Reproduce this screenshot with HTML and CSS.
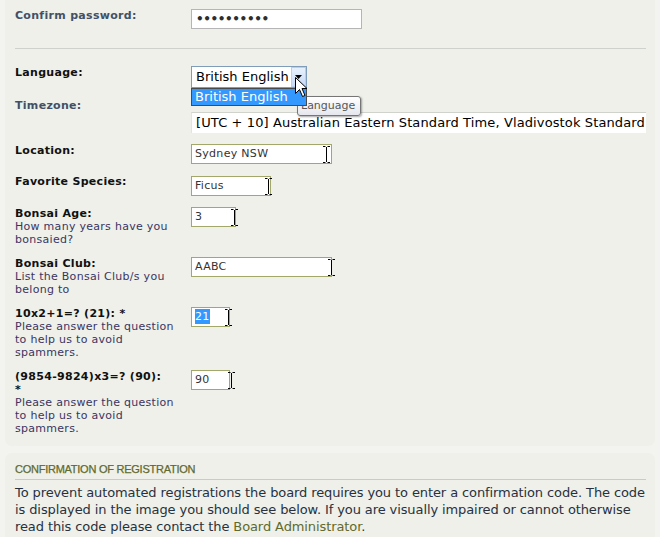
FILE: index.html
```html
<!DOCTYPE html>
<html lang="en">
<head>
<meta charset="utf-8">
<title>Register</title>
<link rel="stylesheet" href="styles.css">
</head>
<body>
<div class="page">
  <div class="panel panel-top">
    <div class="row">
      <div class="label slate">Confirm password:</div>
      <div class="field"><span class="input pw">••••••••••</span></div>
    </div>

    <hr class="sep">

    <div class="row row-lang">
      <div class="label">Language:</div>
      <div class="field">
        <div class="select-lang">
          <span class="sel-text">British English</span>
          <span class="sel-btn"><svg width="7" height="4" viewBox="0 0 7 4"><path d="M0 0h7L3.5 4z" fill="#000"/></svg></span>
          <div class="tooltip">Language</div>
          <div class="dropdown">British English</div>
          <svg class="pointer" width="13" height="21" viewBox="0 0 13 21"><path d="M0.5 0.5V16.5L4.5 12.5L7.5 19.5L10 18.5L7 11.5H12Z" fill="#fff" stroke="#000" stroke-width="1" stroke-linejoin="miter"/></svg>
        </div>
      </div>
    </div>

    <div class="row row-tz">
      <div class="label slate">Timezone:</div>
      <div class="field"><div class="select-tz">[UTC + 10] Australian Eastern Standard Time, Vladivostok Standard Time</div></div>
    </div>

    <div class="row">
      <div class="label">Location:</div>
      <div class="field"><span class="input w141">Sydney NSW<svg class="ibeam" style="left:131px" width="7" height="17" viewBox="0 0 7 17"><path d="M0 0.5H2.5M4.5 0.5H7M3.5 1V16M0 16.5H2.5M4.5 16.5H7" stroke="#000" fill="none"/></svg></span></div>
    </div>

    <div class="row">
      <div class="label">Favorite Species:</div>
      <div class="field"><span class="input w80 mt1">Ficus<svg class="ibeam" style="left:73px" width="7" height="17" viewBox="0 0 7 17"><path d="M0 0.5H2.5M4.5 0.5H7M3.5 1V16M0 16.5H2.5M4.5 16.5H7" stroke="#000" fill="none"/></svg></span></div>
    </div>

    <div class="row">
      <div class="label">Bonsai Age:<span class="explain">How many years have you bonsaied?</span></div>
      <div class="field"><span class="input w45">3<svg class="ibeam" style="left:39px" width="7" height="17" viewBox="0 0 7 17"><path d="M0 0.5H2.5M4.5 0.5H7M3.5 1V16M0 16.5H2.5M4.5 16.5H7" stroke="#000" fill="none"/></svg></span></div>
    </div>

    <div class="row">
      <div class="label">Bonsai Club:<span class="explain">List the Bonsai Club/s you belong to</span></div>
      <div class="field"><span class="input w141">AABC<svg class="ibeam" style="left:136px" width="7" height="17" viewBox="0 0 7 17"><path d="M0 0.5H2.5M4.5 0.5H7M3.5 1V16M0 16.5H2.5M4.5 16.5H7" stroke="#000" fill="none"/></svg></span></div>
    </div>

    <div class="row">
      <div class="label">10x2+1=? (21): *<span class="explain">Please answer the question to help us to avoid spammers.</span></div>
      <div class="field"><span class="input w39"><span class="hl">21</span><svg class="ibeam" style="left:33px" width="7" height="17" viewBox="0 0 7 17"><path d="M0 0.5H2.5M4.5 0.5H7M3.5 1V16M0 16.5H2.5M4.5 16.5H7" stroke="#000" fill="none"/></svg></span></div>
    </div>

    <div class="row">
      <div class="label">(9854-9824)x3=? (90): *<span class="explain">Please answer the question to help us to avoid spammers.</span></div>
      <div class="field"><span class="input w39">90<svg class="ibeam" style="left:36px" width="7" height="17" viewBox="0 0 7 17"><path d="M0 0.5H2.5M4.5 0.5H7M3.5 1V16M0 16.5H2.5M4.5 16.5H7" stroke="#000" fill="none"/></svg></span></div>
    </div>
  </div>

  <div class="panel panel-bottom">
    <h3 class="section-title">CONFIRMATION OF REGISTRATION</h3>
    <p class="body-text">To prevent automated registrations the board requires you to enter a confirmation code. The code is displayed in the image you should see below. If you are visually impaired or cannot otherwise read this code please contact the <a href="#" class="link">Board Administrator</a>.</p>
  </div>
</div>
</body>
</html>
```

FILE: styles.css
```css
html, body {
  margin: 0;
  padding: 0;
}

body {
  background: #f3f4ef;
  font-family: "DejaVu Sans", Verdana, sans-serif;
  color: #000;
  overflow: hidden;
}

.page {
  padding: 0 5px;
}

.panel {
  background: #eef0e9;
  width: 650px;
  box-sizing: border-box;
}

.panel-top {
  border-radius: 0 0 7px 7px;
  padding: 9px 9px 9px 10px;
  display: flex;
  flex-direction: column;
  gap: 11px;
  height: 446px;
}

.panel-bottom {
  margin-top: 7px;
  border-radius: 7px 7px 0 0;
  padding: 9px 9px 10px 10px;
  height: 90px;
}

.row {
  display: grid;
  grid-template-columns: 176px 1fr;
  align-items: start;
}

.label {
  font-size: 11px;
  line-height: 13px;
  font-weight: bold;
  color: #111;
  letter-spacing: 0.3px;
  width: 152px;
}

.label.slate {
  color: #425067;
}

.explain {
  display: block;
  font-weight: normal;
  color: #3b3562;
  letter-spacing: 0.28px;
  width: 170px;
}

.field {
  position: relative;
  min-height: 20px;
}

.input {
  position: relative;
  display: block;
  box-sizing: border-box;
  height: 20px;
  background: #fff;
  border: 1px solid #a2a86a;
  font-size: 11px;
  line-height: 18px;
  padding-left: 3px;
  color: #333;
  letter-spacing: 0.3px;
  white-space: nowrap;
}

.input.pw {
  width: 171px;
  border-color: #b5b5b5;
  font-size: 12px;
  letter-spacing: -0.4px;
  color: #2e2e2e;
  padding-left: 4px;
  font-weight: bold;
}

.w141 { width: 141px; }
.w80 { width: 80px; }
.w45 { width: 45px; }
.w39 { width: 39px; }
.mt1 { margin-top: 1px; }

.hl {
  background: #3399ff;
  color: #fff;
  padding: 1px 0;
}

.ibeam {
  position: absolute;
  top: 1px;
}

.sep {
  border: 0;
  border-top: 1px solid #cfd1cc;
  margin: 8px 0 5px 0;
  width: 631px;
}

.row-lang {
  margin-bottom: -2px;
}

.row-lang .label {
  padding-top: 1px;
}

.select-lang {
  position: relative;
  width: 116px;
  height: 22px;
  box-sizing: border-box;
  margin-top: 1px;
  border: 1px solid #7f9db9;
  background: #fff;
  font-size: 13px;
  line-height: 20px;
}

.sel-text {
  padding-left: 4px;
  color: #000;
}

.sel-btn {
  position: absolute;
  right: 0;
  top: 0;
  width: 15px;
  height: 20px;
  box-sizing: border-box;
  border: 1px solid #b9cfee;
  background: linear-gradient(#e7f0fd, #c8daf7);
  display: flex;
  align-items: center;
  justify-content: center;
}

.dropdown {
  position: absolute;
  left: -1px;
  top: 21px;
  width: 116px;
  height: 18px;
  box-sizing: border-box;
  background: #3399ff;
  border: 1px dotted #d8791c;
  outline: 1px solid #4a4a4a;
  outline-offset: -1px;
  color: #fff;
  font-size: 13px;
  line-height: 16px;
  padding-left: 3px;
  z-index: 2;
}

.tooltip {
  position: absolute;
  left: 105px;
  top: 29px;
  width: 64px;
  height: 20px;
  box-sizing: border-box;
  border: 1px solid #767676;
  border-radius: 3px;
  background: linear-gradient(#ffffff, #e6e7ee);
  box-shadow: 1px 1px 2px rgba(0, 0, 0, 0.35);
  font-size: 11px;
  line-height: 18px;
  color: #575757;
  padding-left: 3px;
  z-index: 1;
}

.pointer {
  position: absolute;
  left: 103px;
  top: 10px;
  z-index: 3;
}

.row-tz .label {
  padding-top: 2px;
}

.select-tz {
  margin-top: 15px;
  width: 455px;
  height: 21px;
  box-sizing: border-box;
  background: #fff;
  border-top: 1px solid #d0d2cc;
  border-left: 1px solid #e2e4de;
  font-size: 13px;
  line-height: 20px;
  padding-left: 4px;
  letter-spacing: 0.12px;
  white-space: nowrap;
  overflow: hidden;
  color: #000;
}

.section-title {
  margin: 0;
  font-family: "Liberation Sans", Arial, sans-serif;
  font-size: 11px;
  font-weight: normal;
  color: #5f6a2c;
  line-height: 14px;
  padding-bottom: 3px;
  border-bottom: 1px solid #c9cbc6;
  width: 631px;
  letter-spacing: -0.25px;
  -webkit-text-stroke: 0.25px #5f6a2c;
}

.body-text {
  margin: 4px 0 0 0;
  font-family: "DejaVu Sans", sans-serif;
  font-size: 13px;
  line-height: 17px;
  color: #28313f;
  letter-spacing: -0.1px;
  width: 636px;
}

.link {
  color: #5f6a2c;
  text-decoration: none;
}
```
